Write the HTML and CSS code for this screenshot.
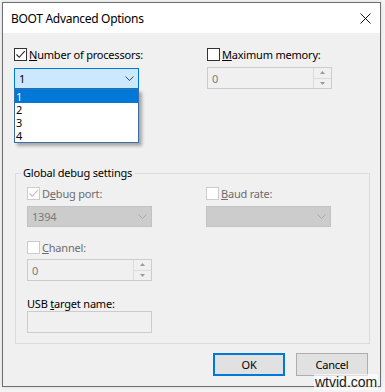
FILE: index.html
```html
<!DOCTYPE html>
<html lang="en">
<head>
    <meta charset="UTF-8">
    <title>BOOT Advanced Options</title>
    <link rel="stylesheet" href="styles.css">
</head>
<body>
    <div class="window">
        <div class="titlebar">
            <span class="title">BOOT Advanced Options</span>
            <svg class="close" width="11" height="11" viewBox="0 0 11 11">
                <path d="M0.5 0.5 L10.5 10.5 M10.5 0.5 L0.5 10.5" stroke="#111" stroke-width="1" fill="none"/>
            </svg>
        </div>

        <div class="client">
            <div class="top-row">
                <div class="field">
                    <label class="check">
                        <span class="box">
                            <svg width="11" height="11" viewBox="0 0 11 11"><path d="M1.5 5.5 L4.2 8.3 L9.8 2.2" stroke="#222" stroke-width="1.1" fill="none"/></svg>
                        </span>
                        <span><u>N</u>umber of processors:</span>
                    </label>
                    <div class="combo-wrap">
                        <div class="combo focused">
                            <span>1</span>
                            <svg width="9" height="5" viewBox="0 0 9 5"><path d="M0.5 0.5 L4.5 4.5 L8.5 0.5" stroke="#444" stroke-width="1" fill="none"/></svg>
                        </div>
                        <ul class="dropdown">
                            <li class="selected">1</li>
                            <li>2</li>
                            <li>3</li>
                            <li>4</li>
                        </ul>
                    </div>
                </div>
                <div class="field">
                    <label class="check">
                        <span class="box"></span>
                        <span><u>M</u>aximum memory:</span>
                    </label>
                    <div class="spinner">
                        <span>0</span>
                        <div class="spin-btns">
                            <span><svg width="5" height="3" viewBox="0 0 5 3"><path d="M0 3 L2.5 0 L5 3 Z" fill="#9a9a9a"/></svg></span>
                            <span><svg width="5" height="3" viewBox="0 0 5 3"><path d="M0 0 L2.5 3 L5 0 Z" fill="#9a9a9a"/></svg></span>
                        </div>
                    </div>
                </div>
            </div>

            <fieldset class="group">
                <legend>Global debug settings</legend>
                <div class="group-grid">
                    <div class="field">
                        <label class="check disabled">
                            <span class="box">
                                <svg width="11" height="11" viewBox="0 0 11 11"><path d="M1.5 5.5 L4.2 8.3 L9.8 2.2" stroke="#bcbcbc" stroke-width="1.1" fill="none"/></svg>
                            </span>
                            <span>D<u>e</u>bug port:</span>
                        </label>
                        <div class="combo dim">
                            <span>1394</span>
                            <svg width="9" height="5" viewBox="0 0 9 5"><path d="M0.5 0.5 L4.5 4.5 L8.5 0.5" stroke="#a8a8a8" stroke-width="1" fill="none"/></svg>
                        </div>
                    </div>
                    <div class="field">
                        <label class="check disabled">
                            <span class="box"></span>
                            <span><u>B</u>aud rate:</span>
                        </label>
                        <div class="combo dim">
                            <span></span>
                            <svg width="9" height="5" viewBox="0 0 9 5"><path d="M0.5 0.5 L4.5 4.5 L8.5 0.5" stroke="#a8a8a8" stroke-width="1" fill="none"/></svg>
                        </div>
                    </div>
                    <div class="field channel">
                        <label class="check disabled">
                            <span class="box"></span>
                            <span><u>C</u>hannel:</span>
                        </label>
                        <div class="spinner">
                            <span>0</span>
                            <div class="spin-btns">
                                <span><svg width="5" height="3" viewBox="0 0 5 3"><path d="M0 3 L2.5 0 L5 3 Z" fill="#9a9a9a"/></svg></span>
                                <span><svg width="5" height="3" viewBox="0 0 5 3"><path d="M0 0 L2.5 3 L5 0 Z" fill="#9a9a9a"/></svg></span>
                            </div>
                        </div>
                    </div>
                    <div class="field usb">
                        <span class="label">USB <u>t</u>arget name:</span>
                        <div class="textbox"></div>
                    </div>
                </div>
            </fieldset>

            <div class="buttons">
                <button class="btn default">OK</button>
                <button class="btn">Cancel</button>
            </div>
        </div>
    </div>
    <span class="watermark">wtvid.com</span>
</body>
</html>
```

FILE: styles.css
```css
body {
    margin: 0;
    background-color: #f4f4f4;
    font-family: "Noto Sans", "Open Sans", sans-serif;
    font-size: 11px;
    letter-spacing: -0.2px;
    color: #000;
    width: 385px;
    height: 392px;
    position: relative;
    overflow: hidden;
}

.window {
    margin: 2px 0 0 2px;
    width: 379px;
    height: 385px;
    box-sizing: border-box;
    border: 1px solid #6e6e6e;
    background-color: #f0f0f0;
    box-shadow: 0 0 4px rgba(0, 0, 0, 0.12);
    display: flex;
    flex-direction: column;
}

.titlebar {
    height: 30px;
    background-color: #fff;
    display: flex;
    align-items: center;
    justify-content: space-between;
    padding: 0 9px 0 8px;
    flex-shrink: 0;
}

.title {
    font-size: 12px;
    letter-spacing: -0.3px;
}

.client {
    flex: 1;
    padding: 15px 0 0 11px;
    position: relative;
}

.top-row {
    display: grid;
    grid-template-columns: 193px 125px;
}

.field {
    display: flex;
    flex-direction: column;
    align-items: flex-start;
}

.check {
    display: flex;
    align-items: center;
    height: 13px;
    gap: 2px;
    line-height: 15px;
    white-space: nowrap;
}

.check.disabled {
    color: #6d6d6d;
}

.box {
    width: 13px;
    height: 13px;
    box-sizing: border-box;
    border: 1px solid #333;
    background-color: #fff;
    display: flex;
    align-items: center;
    justify-content: center;
    flex-shrink: 0;
}

.check.disabled .box {
    border-color: #cccccc;
}

.combo-wrap {
    position: relative;
    margin-top: 7px;
}

.combo {
    width: 125px;
    height: 21px;
    box-sizing: border-box;
    border: 1px solid #7a7a7a;
    display: flex;
    align-items: center;
    justify-content: space-between;
    padding: 0 4px 0 4px;
}

.combo.focused {
    background-color: #cce8ff;
    border-color: #0078d7;
}

.combo.dim {
    margin-top: 6px;
    background-color: #cccccc;
    border-color: #c2c2c2;
    color: #7a7a7a;
}

.dropdown {
    position: absolute;
    left: 0;
    top: 21px;
    width: 125px;
    box-sizing: border-box;
    margin: 0;
    padding: 0;
    list-style: none;
    background-color: #fff;
    border: 1px solid #3a6ea5;
    box-shadow: 3px 3px 3px rgba(0, 0, 0, 0.3);
}

.dropdown li {
    height: 13px;
    line-height: 13px;
    padding-left: 1px;
}

.dropdown li.selected {
    background-color: #0078d7;
    color: #fff;
}

.spinner {
    margin-top: 6px;
    width: 125px;
    height: 22px;
    box-sizing: border-box;
    border: 1px solid #cccccc;
    display: flex;
    align-items: center;
    justify-content: space-between;
    padding-left: 4px;
    color: #7a7a7a;
}

.spin-btns {
    width: 17px;
    height: 100%;
    display: flex;
    flex-direction: column;
    border-left: 1px solid #dcdcdc;
}

.spin-btns span {
    flex: 1;
    display: flex;
    align-items: center;
    justify-content: center;
}

.spin-btns span + span {
    border-top: 1px solid #dcdcdc;
}

.group {
    margin: 76px 0 0 1px;
    width: 355px;
    box-sizing: border-box;
    border: 1px solid #dcdcdc;
    padding: 6px 0 10px 11px;
}

.group legend {
    padding: 0 2px;
    margin-left: -6px;
    line-height: 16px;
}

.group-grid {
    display: grid;
    grid-template-columns: 179px 125px;
}

.channel {
    margin-top: 14px;
}

.channel .spinner {
    margin-top: 5px;
}

.usb {
    grid-column: 1;
    margin-top: 15px;
}

.usb .label {
    line-height: 15px;
}

.textbox {
    margin-top: 0;
    width: 125px;
    height: 22px;
    box-sizing: border-box;
    border: 1px solid #cccccc;
}

.buttons {
    display: flex;
    justify-content: flex-end;
    gap: 11px;
    margin: 9px 12px 0 0;
}

.btn {
    width: 72px;
    height: 23px;
    font-family: inherit;
    font-size: 11px;
    letter-spacing: -0.2px;
    background-color: #e1e1e1;
    border: 1px solid #adadad;
    padding: 0;
    color: #000;
}

.btn.default {
    border: 2px solid #0078d7;
}

.watermark {
    position: absolute;
    left: 314px;
    top: 374px;
    font-family: "Liberation Sans", sans-serif;
    font-size: 14px;
    letter-spacing: 0;
    color: #1a1a1a;
    background-color: rgba(255, 255, 255, 0.6);
    padding: 0 1px;
}
```
